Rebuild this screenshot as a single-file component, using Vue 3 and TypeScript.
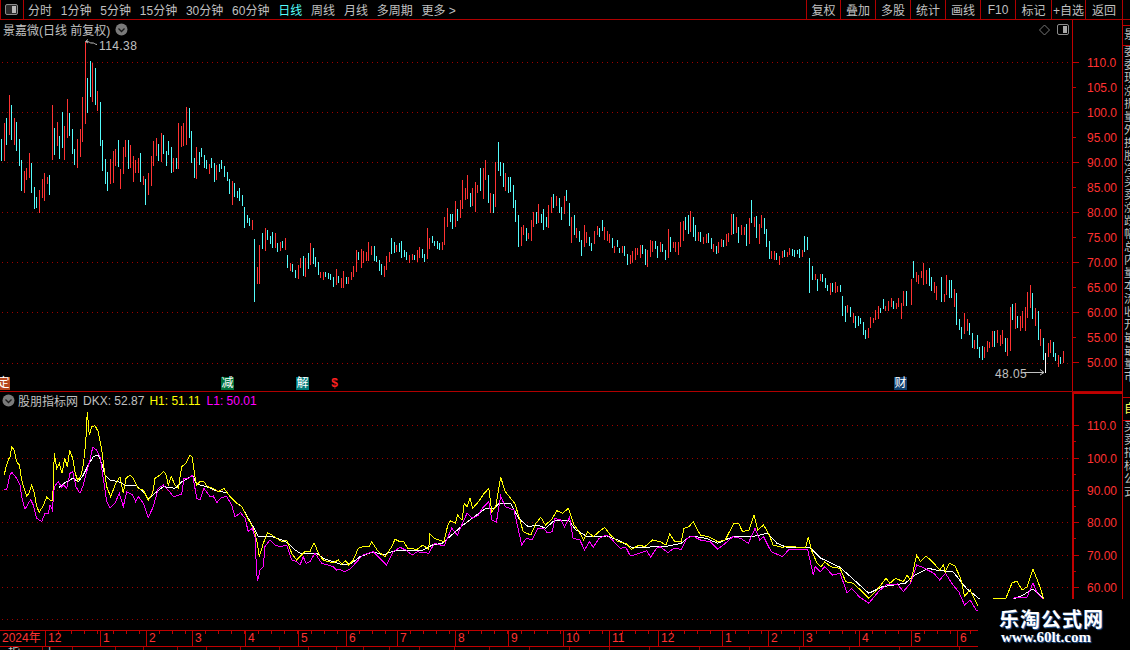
<script setup lang="ts">
const navLeft: { label: string; active?: boolean }[] = [
  { label: '分时' }, { label: '1分钟' }, { label: '5分钟' }, { label: '15分钟' }, { label: '30分钟' },
  { label: '60分钟' }, { label: '日线', active: true }, { label: '周线' }, { label: '月线' }, { label: '多周期' }, { label: '更多 >' },
]
const navRight = [
  { label: '复权', w: 34 }, { label: '叠加', w: 35 }, { label: '多股', w: 35 }, { label: '统计', w: 35 }, { label: '画线', w: 35 },
  { label: 'F10', w: 35 }, { label: '标记', w: 36 }, { label: '+自选', w: 34 }, { label: '返回', w: 37 },
]

// [zoomX, top, bottom, colour] strings, read per reference segment
const segments: [number, string][] = [
  [0, '4 139 160 c,13 123 160 r,19 118 144 c,28 95 134 r,34 105 139 c,43 118 144 r,49 122 150 c,58 139 165 c,64 160 190 c,73 171 192 r,79 168 179 r,88 153 177 r,94 163 192 c,103 187 208 c,109 197 207 c,118 190 212 r,127 179 197 r,133 173 200 r,142 177 183 r,148 175 194 c,157 105 159 r,163 128 154 c,172 122 145 r,178 136 158 c,187 112 147 c,193 126 159 r,202 99 137 r,208 113 135 c,217 129 153 c,223 149 164 c,232 139 167 r,241 129 156 r,247 97 141 r,256 42 123 r,262 78 112 c,271 61 96 c,277 63 101 r,286 68 104 c,292 91 110 r,301 102 145 c,307 140 170 c,316 159 183 c,322 172 190 c,331 159 183 r,340 151 182 r,346 149 165 r,355 140 166 c,361 169 188 r,370 147 173 r,376 140 156 r,385 140 168 c,391 145 167 r,400 156 181 r,406 160 172 r,415 158 172 r,421 153 181 c,430 176 184 r,436 179 204 c,445 173 194 r,454 156 185 r,460 141 165 r,469 138 155 r,475 144 160 c,484 133 161 r,490 135 153 c,499 151 165 c,505 141 154 c,514 147 172 c,520 158 171 r,529 158 168 c,535 123 168 r,544 126 146 r,550 123 145 r,559 107 144 r,568 108 137 c,574 131 162 c,583 158 177 c,589 147 178 r,598 152 164 c,604 148 156 c,613 155 167 c,619 160 168 c,628 164 173 r,634 158 167 c,643 163 181 c,649 165 179 r,658 164 171 c,664 160 168 c,673 166 176 c,682 172 180 c,688 179 193 c'],
  [230, '7 181 204 r,13 183 196 c,22 191 197 c,28 188 200 c,37 195 205 c,43 207 227 c,52 215 222 c,58 218 225 c,67 220 229 r,73 239 301 c,82 267 283 r,88 245 283 r,97 233 248 c,106 228 250 r,112 230 239 c,121 236 243 c,127 232 247 c,136 233 247 r,142 243 251 c,151 242 250 r,157 241 247 c,166 238 249 r,172 255 267 c,181 263 270 r,187 264 271 c,196 270 277 c,205 265 278 r,211 258 267 r,220 256 275 c,226 258 276 r,235 253 268 c,241 243 264 r,250 248 263 c,256 257 266 c,265 262 274 c,271 272 277 r,280 272 279 r,286 272 276 c,295 273 278 c,301 274 279 c,310 277 286 c,319 269 284 r,325 276 282 c,334 278 287 r,340 271 287 r,349 277 283 c,355 277 283 r,364 272 279 r,370 266 276 r,379 250 271 r,385 252 259 c,394 249 267 r,400 251 262 r,409 252 260 r,415 242 260 r,424 246 254 r,433 246 260 c,439 256 261 c,448 260 270 c,454 264 274 c,463 266 276 r,469 256 269 r,478 252 261 r,484 238 253 c,493 242 252 c,499 245 251 r,508 243 251 c,514 241 257 c,523 250 256 c,529 252 259 c,538 255 262 r,547 254 259 r,553 255 259 c,562 250 261 r,568 247 257 r,577 249 257 c,583 254 261 c,592 228 258 r,598 238 248 r,607 236 242 c,613 241 245 c,622 241 248 c,628 243 249 c,637 242 249 r,643 217 244 r,652 208 226 r,661 214 221 c,667 214 228 c,676 201 226 r,682 209 220 c,691 200 217 r,697 180 208 r,706 188 199 r,712 175 198 r,721 193 206 c,727 188 205 r,736 182 211 r,742 185 192 r,751 168 190 c,760 168 198 r,766 160 179 r,775 175 202 c,781 193 212 r,790 194 212 c,796 162 206 r,805 142 170 c,811 162 175 c,820 163 186 c,826 173 190 r,835 177 192 c,841 177 191 c,850 185 207 c,856 200 221 c,865 215 246 c,874 227 245 r,880 225 234 r,889 228 240 c,895 233 238 r'],
  [530, '4 220 240 r,10 212 226 r,19 212 223 c,25 204 222 r,34 214 222 c,40 209 229 c,49 217 226 c,55 205 227 r,64 197 212 r,70 194 207 c,79 196 205 r,88 198 212 c,94 207 219 c,103 196 213 r,109 190 200 c,118 203 225 c,124 217 242 r,133 215 234 c,139 228 237 r,148 231 241 c,154 240 255 c,163 225 246 r,169 232 242 r,178 237 245 c,184 243 250 c,193 231 243 r,202 226 234 r,208 228 236 c,217 220 230 c,223 227 239 r,232 231 240 r,238 234 242 r,247 238 247 c,253 246 252 r,262 240 246 c,268 248 252 c,277 246 252 r,283 246 255 c,292 254 264 c,301 255 263 r,307 251 262 r,316 248 259 r,322 248 254 r,331 245 257 r,337 245 253 c,346 249 264 c,352 250 266 r,361 240 256 r,367 241 251 r,376 241 248 c,382 246 257 c,391 242 251 r,397 244 251 c,406 250 259 c,415 229 257 r,421 237 251 c,430 242 247 r,436 242 251 r,445 242 254 r,451 222 246 r,460 221 240 r,466 217 229 c,475 215 233 c,481 211 231 r,490 217 236 c,496 225 240 c,505 232 240 r,511 232 241 c,520 237 243 r,529 234 242 r,535 233 242 c,544 238 248 c,550 244 251 r,559 246 253 c,565 242 252 r,574 239 246 r,580 240 246 c,589 234 245 r,595 233 241 r,604 214 234 r,610 214 233 c,619 217 232 r,625 227 242 c,634 225 234 r,643 227 234 r,649 224 245 c,658 218 243 r,664 200 222 c,673 217 226 r,679 216 237 c,688 224 243 r,694 215 227 r,703 218 233 c,709 229 246 c,718 241 258 c,724 251 258 r,733 251 259 r,739 253 259 c,748 256 264 r,757 251 257 r,763 250 256 c,772 252 256 r,778 248 254 r,787 249 255 c,793 250 256 c,802 250 253 c,808 249 257 c'],
  [800, '7 250 256 r,13 236 251 c,22 237 249 c,28 258 292 c,37 266 279 c,46 274 279 r,52 279 290 c,61 274 280 r,67 274 281 c,76 278 287 c,82 285 290 c,91 283 294 r,97 283 291 c,106 282 292 r,112 286 291 r,121 285 291 c,127 296 315 c,136 306 321 c,142 305 312 r,151 307 316 c,160 313 322 r,166 316 327 c,175 316 325 c,181 318 323 c,190 322 334 c,196 330 338 c,205 328 337 r,211 317 327 r,220 318 322 r,226 310 319 r,235 306 318 r,241 308 312 c,250 299 308 c,256 306 310 r,265 301 310 r,274 298 306 r,280 301 308 c,289 303 308 r,295 298 306 r,304 303 318 r,310 291 305 r,319 291 305 c,334 279 304 r,340 261 277 c,349 272 281 r,355 275 283 r,364 271 277 r,370 263 284 r,379 270 283 r,388 268 285 c,394 277 290 c,403 282 292 r,409 286 299 r,424 277 301 c,433 294 301 r,439 275 294 r,448 280 297 c,454 280 297 c,463 289 306 r,469 293 324 c,478 319 329 c,484 327 338 c,493 313 333 r,502 319 330 r,508 323 334 c,517 333 347 c,523 340 348 r,532 335 348 c,538 347 357 c,547 346 359 c,553 347 357 r,562 341 351 r,568 342 347 r,577 331 346 r,583 331 346 c,592 330 342 r,601 335 345 r,607 330 343 r,616 338 351 c,622 338 355 r,631 307 350 r,637 304 319 c,646 303 328 r,652 316 327 c,661 316 330 r,667 311 327 r,676 307 330 r,682 292 317 r,691 285 307 r,697 293 318 c,706 308 325 r,715 311 339 c,721 329 345 r,730 338 359 c,736 353 372 w,745 343 356 r,751 340 352 r,760 342 356 c,766 353 360 c,775 355 366 r,781 357 363 c,790 351 362 r'],
]

const barPath = (colour: string): string => {
  let d = ''
  for (const [ox, data] of segments) {
    for (const item of data.split(',')) {
      const [zx, top, bottom, c] = item.split(' ')
      if (c !== colour) continue
      const x = Math.floor(ox + Number(zx) / 3) + 0.5
      d += `M${x} ${top}V${Number(bottom) + 1}`
    }
  }
  return d
}
const redBars = barPath('r')
const cyanBars = barPath('c')
const whiteBars = barPath('w')

const toPoints = (data: string, ox: number, oy: number, sx: number, sy: number): string =>
  data.trim().split(/\s+/).map((pair) => {
    const [x, y] = pair.split(',').map(Number)
    return `${(ox + x / sx).toFixed(1)},${(oy + y / sy).toFixed(1)}`
  }).join(' ')

const line = (a: string, b: string, tail: string): string =>
  [toPoints(a, 0, 410, 3, 3), toPoints(b, 400, 460, 2.613, 3), tail].filter(Boolean).join(' ')

const yellowLine = line(
  '13,195 18,170 25,150 30,140 35,110 42,120 50,155 58,165 65,210 72,235 80,257 87,250 95,225 103,250 110,290 118,306 128,290 140,262 150,270 158,270 163,130 170,175 178,160 186,190 194,145 202,170 209,120 218,145 226,190 233,212 243,195 250,165 257,100 262,5 268,75 275,50 285,47 295,65 305,120 313,180 320,230 332,260 345,225 360,200 370,250 378,205 390,195 400,205 415,235 430,240 445,270 458,250 465,205 480,195 490,185 497,190 505,225 514,200 525,225 535,235 545,170 558,160 570,135 576,140 585,200 590,225 600,215 612,215 622,230 640,235 655,245 672,235 690,260 710,280 725,290 740,320 755,345 765,370 772,400 778,440 790,400 803,368 815,375 830,385 845,395 860,390 875,430 890,450 905,435 915,425 930,425 942,398 958,435 970,450 985,455 1000,458 1015,450 1025,462 1038,452 1045,465 1060,450 1075,415 1090,410 1108,410 1115,395 1135,425 1155,440 1175,410 1185,388 1200,395',
  '10,245 20,265 45,268 60,255 75,268 78,222 90,235 115,245 125,195 132,182 145,190 150,165 162,180 168,130 175,140 183,115 190,145 205,125 220,100 232,85 240,155 250,140 263,52 275,95 300,130 312,175 322,215 342,225 355,190 368,172 380,195 395,180 410,152 425,160 440,145 455,195 465,210 480,240 490,215 505,230 520,215 535,202 550,225 570,245 590,250 605,268 625,255 640,260 660,240 680,245 695,255 705,222 718,245 735,245 742,205 755,200 766,185 785,225 810,232 830,245 850,240 872,190 885,190 895,215 912,210 925,165 935,210 950,195 965,225 975,255 1000,262 1020,258 1040,262 1060,262 1067,232 1075,270 1090,310 1100,320 1110,305 1125,320 1150,325 1165,365 1185,370 1225,415 1250,385 1270,355 1280,370 1295,355 1315,365 1325,345 1335,365 1350,285 1360,305 1375,288 1395,310 1410,330 1420,315 1425,335 1435,310 1450,318 1465,355 1475,408 1490,390 1510,437',
  '985,606 990,604 994,598 1006,598 1012,583 1017,581 1022,590 1027,587 1033,569 1040,587 1044,600',
)
const magentaLine = line(
  '13,240 20,238 30,195 35,187 50,205 60,225 65,260 75,298 85,280 92,270 100,285 110,325 125,335 135,310 145,310 150,285 157,300 163,230 175,215 185,232 190,225 200,235 210,190 218,185 228,230 240,250 250,225 260,185 270,150 278,112 290,120 300,140 312,220 320,275 330,295 345,280 358,250 370,290 380,245 390,250 398,255 407,275 415,260 430,280 445,322 460,290 475,235 490,225 505,240 520,260 545,253 552,205 565,205 578,195 590,265 600,270 612,235 630,260 640,258 650,278 665,262 680,260 695,285 705,320 722,308 735,325 745,365 757,355 765,380 770,490 773,512 780,480 790,470 795,410 810,390 825,405 840,410 860,405 875,450 890,455 900,465 910,440 918,460 930,455 945,430 965,460 985,465 1000,470 1010,480 1020,478 1032,485 1050,478 1075,450 1090,435 1120,425 1145,450 1160,465 1180,425 1200,412',
  '15,270 32,285 45,275 75,280 90,250 115,258 135,205 150,225 175,160 190,175 205,165 215,145 232,125 240,180 252,187 263,108 275,140 298,150 318,255 330,235 345,240 360,205 375,205 385,218 398,215 405,175 420,180 430,200 443,170 452,235 470,240 482,270 495,245 505,262 520,235 540,225 555,240 575,265 590,262 602,288 625,280 645,272 655,292 670,265 680,260 700,278 715,265 735,268 750,235 765,228 785,240 810,245 830,268 850,250 870,230 890,235 910,250 928,205 940,240 950,230 970,275 1000,290 1015,270 1045,268 1065,268 1080,345 1085,320 1098,335 1110,320 1130,345 1150,340 1168,398 1180,385 1200,410 1225,430 1250,395 1270,375 1300,372 1315,395 1335,368 1350,315 1365,322 1395,340 1410,360 1425,340 1445,375 1460,395 1475,435 1490,420 1505,450 1510,452',
  '990,620 1014,598 1027,597 1033,583 1037,593 1044,600',
)
const whiteLine = line(
  '178,232 195,218 218,205 235,215 250,195 265,165 280,140 295,135 305,160 315,195 330,210 355,215 375,225 410,228 430,245 445,268 470,245 490,230 525,235 545,215 578,197 590,222 625,232 650,243 680,248 700,270 725,290 745,325 765,360 775,380 810,378 845,390 865,400 885,420 905,432 950,430 970,445 1000,455 1030,465 1055,460 1080,440 1120,425 1150,435 1175,425 1200,420',
  '60,270 85,255 110,250 135,225 165,195 200,165 225,145 245,145 260,130 290,132 310,175 335,200 360,195 380,205 405,180 440,180 460,210 490,230 540,228 570,240 605,262 640,262 700,258 735,250 760,228 800,235 830,250 870,230 920,230 960,220 985,250 1010,262 1070,262 1100,295 1150,322 1225,400 1260,380 1320,370 1345,345 1380,325 1410,332 1445,335 1480,385 1515,418',
  '990,608 1014,599 1023,595 1033,589 1038,593 1044,600',
)

const priceGrid = [62, 112, 162, 212, 262, 312, 363]
const indicatorGrid = [425, 458, 490, 522, 555, 587, 619]

const priceLabels = ['110.0', '105.0', '100.0', '95.00', '90.00', '85.00', '80.00', '75.00', '70.00', '65.00', '60.00', '55.00', '50.00']
  .map((text, i) => ({ text, y: Math.round(62 + i * 25.04), major: i % 2 === 0 }))
const indicatorLabels = ['110.0', '100.0', '90.00', '80.00', '70.00', '60.00']
  .map((text, i) => ({ text, y: indicatorGrid[i] }))

const markers = [
  { text: '定', left: -3, kind: 'orange' },
  { text: '减', left: 221, kind: 'green' },
  { text: '解', left: 296, kind: 'teal' },
  { text: '$', left: 328, kind: 'dollar' },
  { text: '财', left: 894, kind: 'blue' },
]

const monthEdges: [string, number][] = [
  ['2024年', 0], ['12', 46], ['1', 101], ['2', 147], ['3', 193], ['4', 246], ['5', 299], ['6', 347], ['7', 398], ['8', 456],
  ['9', 509], ['10', 564], ['11', 610], ['12', 659], ['1', 723], ['2', 769], ['3', 804], ['4', 860], ['5', 912], ['6', 958], ['', 1072],
]
const months = monthEdges.slice(0, -1).map(([label, x], i) => ({ label, width: monthEdges[i + 1][1] - x }))

const tabEdges = [0, 43, 73, 116, 144, 178, 207, 241, 280, 309, 337, 364, 390, 420, 455, 490, 530, 570, 610, 650, 700, 750, 800, 850, 900, 960, 1072]
const tabTexts = ['指', '上']
const tabs = tabEdges.slice(0, -1).map((x, i) => ({ text: tabTexts[i] ?? '', width: tabEdges[i + 1] - x }))

const sideChars = '委委现涨振量外换股净买卖涨跌幅总内量本流收开最最量市'.split('')
const sideLower = '买卖指标公式'.split('')
</script>

<template>
  <div class="app">
    <header class="toolbar">
      <div class="toggle">
        <svg width="14" height="12" viewBox="0 0 14 12">
          <rect x="0.5" y="0.5" width="12" height="10" rx="1.5" fill="#2a2a2a" stroke="#8c8c8c" />
          <rect x="7" y="2" width="4" height="7" fill="#b8b8b8" />
        </svg>
      </div>
      <nav class="nav-left">
        <span v-for="item in navLeft" :key="item.label" class="nav-item" :class="{ active: item.active }">{{ item.label }}</span>
      </nav>
      <nav class="nav-right">
        <span v-for="item in navRight" :key="item.label" class="nav-btn" :style="{ width: item.w + 'px' }">{{ item.label }}</span>
      </nav>
    </header>

    <div class="workspace">
      <main class="charts">
        <section class="row price-row">
          <div class="plot">
            <svg class="canvas" width="1072" height="371" viewBox="0 20 1072 371">
              <g shape-rendering="crispEdges">
                <line v-for="y in priceGrid" :key="y" class="grid" x1="2" x2="1072" :y1="y + 0.5" :y2="y + 0.5" />
                <path :d="redBars" class="bar-red" />
                <path :d="cyanBars" class="bar-cyan" />
                <path :d="whiteBars" class="bar-white" />
              </g>
              <path d="M85.5 41.5 L88 39.5 M85.5 41.5 L88 43 M86 41.5 C89 41 90 43.5 92 43 C94 42.5 95 44.5 97 44.5" class="note-arrow" />
              <text x="99" y="50" class="note">114.38</text>
              <text x="995" y="378" class="note">48.05</text>
              <path d="M1024 372.5 H1044 M1040 369.5 L1044 372.5 L1040 375" class="note-arrow" />
            </svg>
            <div class="pane-head">
              <span class="pane-title">景嘉微(日线 前复权)</span>
              <svg class="round-btn" width="13" height="13" viewBox="0 0 13 13">
                <circle cx="6.5" cy="6.5" r="6" fill="#7a7a7a" />
                <path d="M3.5 5.5 L6.5 8.5 L9.5 5.5" fill="none" stroke="#1a1a1a" stroke-width="1.3" />
              </svg>
            </div>
            <svg class="pane-tools" width="34" height="14" viewBox="0 0 34 14">
              <path d="M6.5 2 L11.5 7 L6.5 12 L1.5 7 Z" fill="none" stroke="#777" />
              <rect x="19.5" y="1.5" width="11" height="10" rx="1.5" fill="none" stroke="#8c8c8c" />
              <rect x="25" y="3" width="4" height="7" fill="#a8a8a8" />
            </svg>
            <span v-for="m in markers" :key="m.text" class="marker" :class="m.kind" :style="{ left: m.left + 'px' }">{{ m.text }}</span>
          </div>
          <svg class="axis" width="50" height="371" viewBox="1072 20 50 371">
            <g v-for="l in priceLabels" :key="l.text">
              <line class="tick" x1="1073" :x2="l.major ? 1079 : 1076" :y1="l.y + 0.5" :y2="l.y + 0.5" shape-rendering="crispEdges" />
              <text x="1087" :y="l.y + 5" class="axis-text">{{ l.text }}</text>
            </g>
          </svg>
        </section>

        <section class="row indicator-row">
          <div class="plot">
            <svg class="canvas" width="1072" height="238" viewBox="0 392 1072 238">
              <g shape-rendering="crispEdges">
                <line v-for="y in indicatorGrid" :key="y" class="grid" x1="2" x2="1072" :y1="y + 0.5" :y2="y + 0.5" />
                <polyline :points="whiteLine" class="line white" />
                <polyline :points="yellowLine" class="line yellow" />
                <polyline :points="magentaLine" class="line magenta" />
              </g>
            </svg>
            <div class="pane-head indicator-head">
              <svg class="round-btn first" width="13" height="13" viewBox="0 0 13 13">
                <circle cx="6.5" cy="6.5" r="6" fill="#7a7a7a" />
                <path d="M3.5 5.5 L6.5 8.5 L9.5 5.5" fill="none" stroke="#1a1a1a" stroke-width="1.3" />
              </svg>
              <span class="pane-title">股朋指标网</span>
              <span class="pane-title value">DKX: 52.87</span>
              <span class="value-h">H1: 51.11</span>
              <span class="value-l">L1: 50.01</span>
            </div>
          </div>
          <svg class="axis axis-strong" width="50" height="238" viewBox="1072 392 50 238">
            <g v-for="l in indicatorLabels" :key="l.text">
              <line class="tick" x1="1073" x2="1079" :y1="l.y + 0.5" :y2="l.y + 0.5" shape-rendering="crispEdges" />
              <line class="tick" x1="1073" x2="1076" :y1="l.y + 16.5" :y2="l.y + 16.5" shape-rendering="crispEdges" />
              <text x="1087" :y="l.y + 5" class="axis-text">{{ l.text }}</text>
            </g>
          </svg>
        </section>

        <div class="timeline">
          <span v-for="(m, i) in months" :key="i" class="month" :style="{ width: m.width + 'px' }">{{ m.label }}</span>
        </div>
        <div class="tabs">
          <span v-for="(t, i) in tabs" :key="i" class="tab" :style="{ width: t.width + 'px' }">{{ t.text }}</span>
        </div>
      </main>

      <aside class="side">
        <div class="side-gap"></div>
        <div class="side-title">景</div>
        <div class="side-list">
          <span v-for="(c, i) in sideChars" :key="i">{{ c }}</span>
        </div>
        <div class="side-tab">自</div>
        <div class="side-list lower">
          <span v-for="(c, i) in sideLower" :key="i">{{ c }}</span>
        </div>
      </aside>
    </div>

    <div class="watermark">
      <div class="wm-title">乐淘公式网</div>
      <div class="wm-url">www.60lt.com</div>
    </div>
  </div>
</template>

<style>
html, body { background: #000; overflow: hidden; }
</style>

<style scoped>
.app {
  position: relative;
  width: 1130px;
  height: 650px;
  background: #000;
  overflow: hidden;
  font: 12px "Liberation Sans", "Noto Sans CJK SC", sans-serif;
  color: #c0c0c0;
}
.toolbar {
  display: flex;
  align-items: stretch;
  height: 19px;
  padding-right: 7px;
  border-bottom: 1px solid #b00000;
  box-sizing: content-box;
}
.toggle {
  display: flex;
  align-items: center;
  justify-content: center;
  width: 22px;
  border-left: 1px solid #b00000;
  border-right: 1px solid #b00000;
}
.nav-left {
  display: flex;
  align-items: center;
  gap: 8.8px;
  padding-left: 4px;
  white-space: nowrap;
}
.nav-item.active { color: #54fcfc; }
.nav-right {
  display: flex;
  margin-left: auto;
  border-left: 1px solid #b00000;
}
.nav-btn {
  display: flex;
  align-items: center;
  justify-content: center;
  box-sizing: border-box;
  flex: none;
  border-right: 1px solid #b00000;
  white-space: nowrap;
}
.workspace {
  display: flex;
  height: 630px;
}
.charts {
  display: flex;
  flex-direction: column;
  width: 1122px;
  flex: none;
}
.row {
  display: flex;
  flex: none;
}
.price-row {
  height: 371px;
  border-bottom: 1px solid #b00000;
}
.indicator-row { height: 238px; }
.plot {
  position: relative;
  width: 1072px;
  flex: none;
  overflow: hidden;
}
.canvas {
  position: absolute;
  left: 0;
  top: 0;
  display: block;
}
.grid {
  stroke: #a00000;
  stroke-width: 1;
  stroke-dasharray: 1 4;
}
.bar-red, .bar-cyan, .bar-white { fill: none; stroke-width: 1; }
.bar-red { stroke: #ff3232; }
.bar-cyan { stroke: #54fcfc; }
.bar-white { stroke: #fff; }
.line { fill: none; stroke-width: 1; }
.yellow { stroke: #ffff00; }
.magenta { stroke: #ff00ff; }
.white { stroke: #fff; }
.note { fill: #c0c0c0; font-size: 12px; letter-spacing: 0.4px; }
.note-arrow { fill: none; stroke: #c0c0c0; stroke-width: 1; }
.pane-head {
  position: relative;
  display: flex;
  align-items: center;
  height: 18px;
  padding-left: 3px;
  white-space: nowrap;
}
.round-btn { margin-left: 5px; flex: none; }
.round-btn.first { margin-left: -1px; margin-right: 3px; }
.indicator-head { height: 17px; }
.value { margin-left: 5px; }
.value-h { margin-left: 5px; color: #ffff00; }
.value-l { margin-left: 6px; color: #ff00ff; }
.pane-tools {
  position: absolute;
  right: 0;
  top: 3px;
}
.marker {
  position: absolute;
  top: 357px;
  width: 13px;
  height: 13px;
  line-height: 13px;
  text-align: center;
  color: #fff;
}
.orange { background: #b5451b; }
.green { background: #00703a; }
.teal { background: #007a7a; }
.blue { background: #12406e; }
.dollar { color: #ff2020; font-weight: 700; }
.axis {
  display: block;
  flex: none;
  background: linear-gradient(#c00000, #c00000) left / 1px 100% no-repeat;
}
.axis-strong {
  background:
    linear-gradient(#c00000, #c00000) left / 2px 100% no-repeat,
    linear-gradient(#c00000, #c00000) top / 100% 2px no-repeat;
}
.tick { stroke: #c00000; stroke-width: 1; }
.axis-text { fill: #ff3232; font-size: 12px; }
.timeline {
  display: flex;
  height: 17px;
  box-sizing: border-box;
  border-top: 1px solid #c00000;
  border-bottom: 1px solid #c00000;
  flex: none;
}
.month {
  flex: none;
  box-sizing: border-box;
  padding-left: 2px;
  border-right: 1px solid #c00000;
  color: #ff3232;
  line-height: 15px;
  white-space: nowrap;
  background: repeating-linear-gradient(to right, transparent 0 12px, #c00000 12px 13px) top left / 100% 3px no-repeat;
}
.month:first-child { background: none; }
.tabs {
  display: flex;
  height: 3px;
  overflow: hidden;
  flex: none;
}
.tab {
  flex: none;
  box-sizing: border-box;
  padding-left: 1px;
  border-right: 1px solid #a00000;
  line-height: 12px;
  height: 3px;
  overflow: hidden;
  white-space: nowrap;
}
.tab:first-child { padding-left: 8px; }
.side {
  display: flex;
  flex-direction: column;
  flex: 1;
  min-width: 0;
  overflow: hidden;
  border-left: 1px solid #c00000;
  color: #bdbdbd;
}
.side-gap { height: 5px; border-bottom: 1px solid #c00000; flex: none; }
.side-title {
  height: 19px;
  line-height: 19px;
  border-bottom: 1px solid #c00000;
  padding-left: 1px;
  flex: none;
}
.side-list {
  display: flex;
  flex-direction: column;
  height: 351px;
  overflow: hidden;
  padding-left: 1px;
  flex: none;
}
.side-list span { display: block; height: 13px; line-height: 13px; margin-bottom: 0; overflow: hidden; flex: none; }
.side-tab {
  height: 22px;
  line-height: 22px;
  color: #ffff54;
  padding-left: 1px;
  border-top: 1px solid #c00000;
  border-bottom: 1px solid #c00000;
  flex: none;
}
.side-list.lower { height: auto; }
.watermark {
  position: absolute;
  right: 0;
  bottom: 0;
  width: 152px;
  height: 51px;
  box-sizing: border-box;
  padding: 9px 0 0 21px;
  background: #000;
  color: #fff;
  white-space: nowrap;
}
.wm-title {
  font: 700 20px/22px "Noto Sans CJK SC", sans-serif;
  letter-spacing: 1px;
  text-shadow: 1px 1px 1px #2a5fa0;
}
.wm-url {
  margin: -1px 0 0 2px;
  font: 700 15px/17px "Liberation Serif", serif;
  text-shadow: 1px 1px 1px #2a5fa0;
}
</style>
